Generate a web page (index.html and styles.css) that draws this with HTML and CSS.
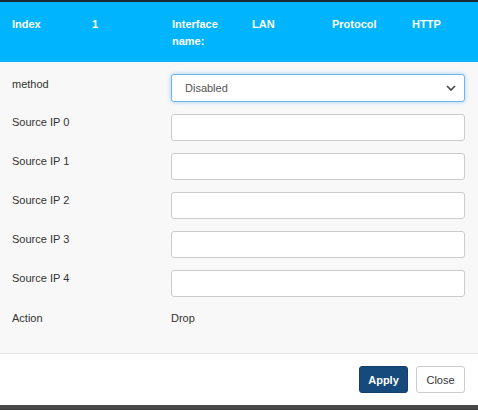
FILE: index.html
```html
<!DOCTYPE html>
<html lang="en">

<head>
    <meta charset="UTF-8">
    <meta name="viewport" content="width=device-width, initial-scale=1.0">
    <title>Access Rule</title>
    <link rel="stylesheet" href="styles.css">
</head>

<body>
    <div class="backdrop-top"></div>

    <div class="modal">
        <!-- Header with rule summary -->
        <div class="modal-header">
            <span class="hcell">Index</span>
            <span class="hcell">1</span>
            <span class="hcell">Interface name:</span>
            <span class="hcell">LAN</span>
            <span class="hcell">Protocol</span>
            <span class="hcell">HTTP</span>
        </div>

        <form class="modal-body">
            <div class="form-row">
                <label class="first">method</label>
                <select class="field select-field" name="method">
                    <option>Disabled</option>
                    <option>Enabled</option>
                </select>
            </div>
            <div class="form-row">
                <label>Source IP 0</label>
                <input class="field" type="text" name="ip0">
            </div>
            <div class="form-row">
                <label>Source IP 1</label>
                <input class="field" type="text" name="ip1">
            </div>
            <div class="form-row">
                <label>Source IP 2</label>
                <input class="field" type="text" name="ip2">
            </div>
            <div class="form-row">
                <label>Source IP 3</label>
                <input class="field" type="text" name="ip3">
            </div>
            <div class="form-row">
                <label>Source IP 4</label>
                <input class="field" type="text" name="ip4">
            </div>
            <div class="form-row text-row">
                <label>Action</label>
                <span class="value">Drop</span>
            </div>
        </form>

        <div class="modal-footer">
            <button class="btn btn-primary" type="button">Apply</button>
            <button class="btn btn-default" type="button">Close</button>
        </div>
    </div>

    <div class="backdrop-bottom"></div>
</body>

</html>
```

FILE: styles.css
```css
body {
    margin: 0;
    font-family: "Liberation Sans", Arial, sans-serif;
    font-size: 11px;
    color: #333;
    background: #3c3c3c;
}

.backdrop-top {
    height: 2px;
    background: #1d2a35;
}

.backdrop-bottom {
    height: 4px;
    background: #474747;
}

.modal {
    background: #f8f8f8;
}

.modal-header {
    display: grid;
    grid-template-columns: repeat(6, 80px);
    align-items: start;
    height: 60px;
    padding: 0 12px;
    box-sizing: border-box;
    padding-top: 14px;
    background: #00b4fe;
    color: #fff;
    font-weight: bold;
    line-height: 17px;
}

.hcell {
    padding-right: 20px;
}

.modal-body {
    display: flex;
    flex-direction: column;
    gap: 12px;
    padding: 12px 13px 28px 12px;
    border-bottom: 1px solid #e3e3e3;
}

.form-row {
    display: flex;
    align-items: flex-start;
}

.form-row label {
    width: 159px;
    flex-shrink: 0;
    padding-top: 1px;
    line-height: 14px;
}

.form-row label.first {
    padding-top: 3px;
}

.field {
    flex: 1;
    height: 27px;
    box-sizing: border-box;
    border: 1px solid #ccc;
    border-radius: 3px;
    background: #fff;
    font-family: inherit;
    font-size: 11px;
    color: #555;
    padding: 0 13px;
    margin: 0;
}

.select-field {
    height: 28px;
    border-color: #6cb8e6;
    box-shadow: 0 0 4px rgba(102, 175, 233, 0.6);
    appearance: none;
    background-image: url("data:image/svg+xml;utf8,<svg xmlns='http://www.w3.org/2000/svg' width='10' height='6' viewBox='0 0 10 6'><path d='M1 1l4 4 4-4' fill='none' stroke='%23444' stroke-width='1.6'/></svg>");
    background-repeat: no-repeat;
    background-position: right 8px center;
}

.text-row label,
.text-row .value {
    padding-top: 2px;
    line-height: 14px;
}

.modal-footer {
    display: flex;
    justify-content: flex-end;
    gap: 8px;
    padding: 12px 13px 12px 12px;
    background: #fff;
}

.btn {
    height: 27px;
    width: 49px;
    font-family: inherit;
    font-size: 11px;
    border-radius: 3px;
    padding: 0;
    cursor: pointer;
}

.btn-primary {
    background: #174a7c;
    border: 1px solid #153f6a;
    color: #fff;
    font-weight: bold;
}

.btn-default {
    background: #fff;
    border: 1px solid #ccc;
    color: #333;
}
```
